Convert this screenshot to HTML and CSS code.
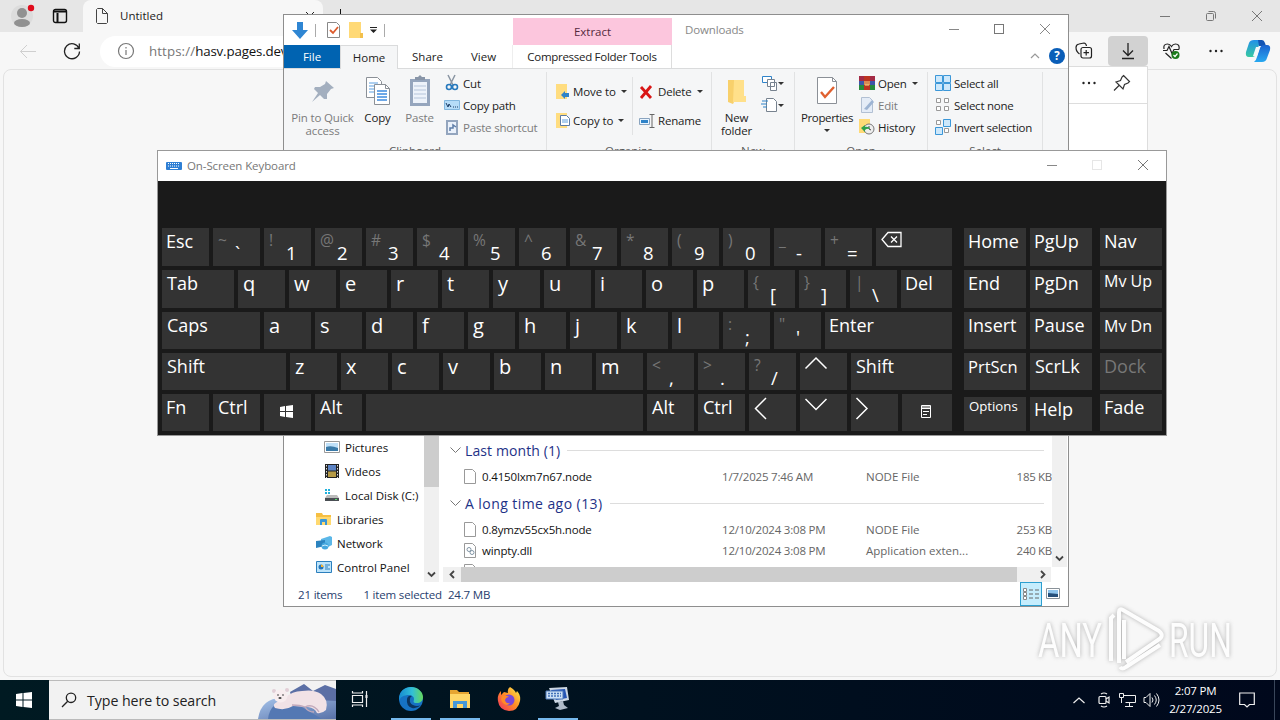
FILE: index.html
```html
<!DOCTYPE html>
<html lang="en">
  <head>
    <meta charset="UTF-8" />
    <title>Desktop</title>
    <link rel="stylesheet" href="styles.css">
  </head>
  <body>
    <!-- browser -->
    <section class="browser">
      <div class="tabstrip">
        <svg class="avatar" width="24" height="26" viewBox="0 0 24 26"><circle cx="11" cy="14" r="11" fill="#dcdcdc"/><circle cx="11" cy="11" r="5" fill="#919191"/><ellipse cx="11" cy="21" rx="8" ry="4" fill="#919191"/><circle cx="20" cy="6" r="3.200" fill="#e00b1c"/></svg>
        <svg class="workspaces" width="16" height="16" viewBox="0 0 16 16" fill="none" stroke="#111" stroke-width="1.4"><rect x="1.5" y="1.5" width="13" height="13" rx="2"/><path d="M2 3.5h12M5.500 5v9" stroke-width="2"/></svg>
        <div class="tab">
          <svg width="12" height="16" viewBox="0 0 12 16" fill="none" stroke="#444"><path d="M1.5.5h5l5 5v9l-1 1h-9l-1-1v-13zM6.500.5v5h5"/></svg>
          <span>Untitled</span>
          <svg class="tab-close" width="10" height="10" viewBox="0 0 10 10" stroke="#222"><path d="M1 1l8 8M9 1l-8 8"/></svg>
        </div>
        <svg class="new-tab" width="12" height="12" viewBox="0 0 12 12" stroke="#111"><path d="M5.500 0v12M0 6h12"/></svg>
        <div class="browser-buttons">
          <svg width="12" height="12" viewBox="0 0 12 12" stroke="#777"><path d="M1 6.500h10"/></svg>
          <svg width="12" height="12" viewBox="0 0 12 12" fill="none" stroke="#777"><rect x="1.500" y="3.500" width="7" height="7" rx="1"/><path d="M3.500 1.500h5q2 0 2 2v5"/></svg>
          <svg width="12" height="12" viewBox="0 0 12 12" stroke="#777"><path d="M1 1l10 10M11 1l-10 10"/></svg>
        </div>
      </div>
      <div class="toolbar">
        <svg class="back" width="18" height="16" viewBox="0 0 18 16" fill="none" stroke="#cfcfcf"><path d="M17 8.500H1.500M8 2l-6.500 6.500L8 15"/></svg>
        <svg class="reload" width="18" height="18" viewBox="0 0 18 18" fill="none" stroke="#222" stroke-width="1.300"><path d="M16 6.500A7.500 7.500 0 1 0 16.500 9.500M16.300 1.500v5h-5"/></svg>
        <div class="address">
          <svg width="18" height="18" viewBox="0 0 18 18" fill="none" stroke="#777" stroke-width="1.200"><circle cx="9" cy="9" r="7.500"/><path d="M9 8v5M9 5v1.500"/></svg>
          <p><span>https://</span>hasv.pages.dev</p>
        </div>
        <div class="tools">
          <svg class="collections" width="18" height="18" viewBox="0 0 18 18" fill="none" stroke="#222" stroke-width="1.200"><path d="M4.500 12Q1 9.500 1 5.500q0-3 3-3.500l5-1q2 0 2.500 3"/><rect x="6" y="5.500" width="10.500" height="10.500" rx="2"/><path d="M11.200 8v5.500M8.500 10.700H14"/></svg>
          <div class="download-button"><svg width="14" height="18" viewBox="0 0 14 18" fill="none" stroke="#222" stroke-width="1.300"><path d="M7 1v12M2 8.500l5 5 5-5M1 16.500h12"/></svg></div>
          <svg class="health" width="20" height="18" viewBox="0 0 20 18" fill="none" stroke="#222" stroke-width="1.200"><path d="M2 7Q1 2 5.500 2q2.500 0 4 2.500 1.500-2.500 4-2.500 4.500 0 3.500 5.500M1 8.500h4l2-4 3 7 2-4h5M3.500 11l6 5.500"/><circle cx="13.500" cy="13" r="4" fill="#1b7a1b" stroke="none"/><path d="M11.500 13l1.500 1.500 2.500-3" stroke="#fff"/></svg>
          <svg class="dots" width="14" height="4" viewBox="0 0 14 4" fill="#222"><circle cx="1.500" cy="2" r="1.200"/><circle cx="7" cy="2" r="1.200"/><circle cx="12.500" cy="2" r="1.200"/></svg>
          <svg class="copilot" width="26" height="24" viewBox="0 0 26 24">
            <defs>
              <linearGradient id="cp1" x1="0" y1="0" x2="0" y2="1"><stop offset="0" stop-color="#2390e8"/><stop offset="1" stop-color="#38c9a2"/></linearGradient>
              <linearGradient id="cp2" x1="0" y1="0" x2="0" y2="1"><stop offset="0" stop-color="#1b62cf"/><stop offset="1" stop-color="#28a9f0"/></linearGradient>
            </defs>
            <path d="M9 1h8q-2 1-3 5l-3 9q-1 3-4 3H4q-4 0-3-5l3-9q1-3 5-3z" fill="url(#cp1)"/>
            <path d="M13 1h4q2 0 3 3l1 3h-7z" fill="#1354b4"/>
            <path d="M17 23H9q2-1 3-5l3-9q1-3 4-3h3q4 0 3 5l-3 8q-1 4-5 4z" fill="url(#cp2)"/>
            <path d="M11 8h4l-3 9H8z" fill="#f5f8fa"/>
          </svg>
        </div>
      </div>
      <div class="page"></div>
      <div class="downloads">
        <div class="downloads-head">
          <svg width="14" height="4" viewBox="0 0 14 4" fill="#222"><circle cx="1.500" cy="2" r="1.200"/><circle cx="7" cy="2" r="1.200"/><circle cx="12.500" cy="2" r="1.200"/></svg>
          <svg width="18" height="18" viewBox="0 0 18 18" fill="none" stroke="#333" stroke-width="1.200"><path d="M10.500 1.500l6 6-1.500 1.500-3.500 1.500-1.500 4.500-7-7 4.500-1.500L9 3zM6 11.500L1 16.500"/></svg>
        </div>
      </div>
    </section>

    <!-- file explorer -->
    <section class="explorer">
      <header class="explorer-title">
        <div class="quick">
          <svg width="16" height="17" viewBox="0 0 16 17"><path d="M5 0h6v8h5l-8 9-8-9h5z" fill="#2f86d3"/></svg>
          <i></i>
          <svg class="q-check" width="13" height="16" viewBox="0 0 13 16"><path d="M.5.5h9l3 3v12H.5z" fill="#fff" stroke="#888"/><path d="M3 8l3 3 5-6" fill="none" stroke="#dd5a2b" stroke-width="1.800"/></svg>
          <svg class="q-folder" width="14" height="16" viewBox="0 0 14 16"><path d="M0 0h12v11h2v5H0z" fill="#ffd976"/><path d="M11 11h3v5h-3z" fill="#f3c04c"/></svg>
          <svg width="7" height="6" viewBox="0 0 7 6"><path d="M0 0h7v1H0zM0 2.500h7L3.500 6z" fill="#222"/></svg>
          <i></i>
        </div>
        <div class="context-tab">Extract</div>
        <span class="window-name">Downloads</span>
        <div class="window-buttons">
          <svg width="12" height="12" viewBox="0 0 12 12" stroke="#888"><path d="M0 5.500h10"/></svg>
          <svg width="12" height="12" viewBox="0 0 12 12" fill="none" stroke="#777"><rect x=".5" y=".5" width="9" height="9"/></svg>
          <svg width="12" height="12" viewBox="0 0 12 12" stroke="#888"><path d="M1 0l10 10M11 0L1 10"/></svg>
        </div>
      </header>
      <nav class="ribbon-tabs">
        <span class="file">File</span>
        <span class="home">Home</span>
        <span class="share">Share</span>
        <span class="view">View</span>
        <span class="tools-tab">Compressed Folder Tools</span>
        <svg class="collapse" width="10" height="6" viewBox="0 0 10 6" fill="none" stroke="#999" stroke-width="1.200"><path d="M1 5l4-4 4 4"/></svg>
        <b class="help">?</b>
      </nav>
      <div class="ribbon">
        <div class="group clipboard">
          <div class="group-body">
            <div class="big pin off">
              <svg width="32" height="34" viewBox="0 0 32 34" fill="#a3afbf"><path d="M19 7l8 7-3 1-4 5 0 5-3 0-4-4-8 7 6-9-4-4 1-2 5 0 5-3z"/></svg>
              <p>Pin to Quick<br>access</p>
            </div>
            <div class="big copy">
              <svg width="26" height="34" viewBox="0 0 26 34" fill="#fff" stroke="#8b9097"><path d="M1.500 3.500h11l4 4v16h-15z"/><path d="M4 9h9M4 12h9M4 15h9M4 18h9" stroke="#5d9fe0"/><path d="M9.500 10.500h11l4 4v16h-15z"/><path d="M20.500 10.500v4h4" fill="none"/><path d="M12 17h10M12 20h10M12 23h10M12 26h10" stroke="#3f8ce0" stroke-width="1.400"/></svg>
              <p>Copy</p>
            </div>
            <div class="big paste off">
              <svg width="22" height="34" viewBox="0 0 22 34"><path d="M1 5h20v27H1z" fill="#95a5bd"/><path d="M4 8h14v21H4z" fill="#edf2fa"/><path d="M6 6V3h3l2-2 2 2h3v3z" fill="#8895a8"/><path d="M5 12h12M5 16h12M5 20h12M5 24h12" stroke="#b5c4da"/></svg>
              <p>Paste</p>
            </div>
            <div class="small-list">
              <div><svg width="16" height="18" viewBox="0 0 16 18" fill="none"><path d="M4 1l5 10M11 1L6 11" stroke="#8a95a3" stroke-width="1.500"/><circle cx="5" cy="13" r="2.500" stroke="#2779bd" stroke-width="1.600"/><circle cx="11" cy="13" r="2.500" stroke="#2779bd" stroke-width="1.600"/></svg><span>Cut</span></div>
              <div><svg width="16" height="16" viewBox="0 0 16 16"><path d="M.5 3.500h15v9H.5z" fill="#b6dcf8" stroke="#82b6de"/><path d="M2 6l2 4 1-3 2 3M9 10h1M11 10h1M13 10h1" stroke="#1b3c66" fill="none"/></svg><span>Copy path</span></div>
              <div class="off"><svg width="16" height="16" viewBox="0 0 16 16"><path d="M2 1h12v15H2z" fill="#93a5be"/><path d="M4 3h8v11H4z" fill="#eaf1fb"/><path d="M6 12V9h3V6l3 2" fill="none" stroke="#5e7da8" stroke-width="1.500"/></svg><span>Paste shortcut</span></div>
            </div>
          </div>
          <h4>Clipboard</h4>
        </div>
        <div class="group organize">
          <div class="group-body">
            <div class="medium-list">
              <div><svg width="14" height="16" viewBox="0 0 14 16"><path d="M0 0h11v15H0z" fill="#ffdd80"/><path d="M5 11l4-4v2h4v4H9v2z" fill="#2f83c9"/></svg><span>Move to</span><em></em></div>
              <div><svg width="14" height="16" viewBox="0 0 14 16"><path d="M0 0h11v15H0z" fill="#ffdd80"/><path d="M4.500 2.500h6l3 3v7h-9z" fill="#fff" stroke="#5c7ba5"/><path d="M6 7h6M6 9h6" stroke="#5d9fe0"/></svg><span>Copy to</span><em></em></div>
            </div>
            <div class="medium-list second">
              <div><svg width="16" height="16" viewBox="0 0 16 16"><path d="M2 3l10 11M12 2L2 14" stroke="#d91616" stroke-width="2.800"/></svg><span>Delete</span><em></em></div>
              <div><svg width="16" height="16" viewBox="0 0 16 16" fill="none"><path d="M.5 5.500h10v6H.5z" fill="#eaf5ff" stroke="#8aa4bf"/><path d="M2 7h7v3H2z" fill="#2f83c9"/><path d="M13 1.500v13M10.500 1.500h5M10.500 14.500h5" stroke="#666"/></svg><span>Rename</span></div>
            </div>
          </div>
          <h4>Organize</h4>
        </div>
        <div class="group new">
          <div class="group-body">
            <div class="big new-folder">
              <svg width="20" height="34" viewBox="0 0 20 34"><path d="M1 6h8v18l-3 6-5-2z" fill="#f8d06b"/><path d="M7 6h10v16h2v6H6z" fill="#ffe08a"/></svg>
              <p>New<br>folder</p>
            </div>
            <div class="new-items">
              <div><svg width="17" height="16" viewBox="0 0 17 16" fill="#fff" stroke="#77828f"><path d="M1.500 1.500h9v6h-9z" stroke="#2f83c9"/><path d="M6.500 4.500h7v7h-7zM9.500 7.500h6v8h-6z"/></svg><em></em></div>
              <div><svg width="17" height="16" viewBox="0 0 17 16" fill="#fff" stroke="#77828f"><path d="M5.500 1.500h7l3 3v10h-10z"/><path d="M1 4h6M0 7h6M2 10h4" stroke="#2f83c9"/></svg><em></em></div>
            </div>
          </div>
          <h4>New</h4>
        </div>
        <div class="group open">
          <div class="group-body">
            <div class="big properties">
              <svg width="22" height="34" viewBox="0 0 22 34"><path d="M1.500 3.500h15l4 4v22h-19z" fill="#fff" stroke="#8b9097"/><path d="M16.500 3.500v4h4" fill="none" stroke="#8b9097"/><path d="M5 18l4 5 9-10" fill="none" stroke="#e0602f" stroke-width="2.400"/></svg>
              <p>Properties</p><em></em>
            </div>
            <div class="small-list">
              <div><svg width="16" height="16" viewBox="0 0 16 16"><path d="M0 1h16v5H0z" fill="#a32a45"/><path d="M0 6h16v4H0z" fill="#3d56a8"/><path d="M0 10h16v5H0z" fill="#278b3c"/><path d="M5 1h6v14H5z" fill="#bb3321"/><path d="M6 6v4h4V6M8 6v4" fill="none" stroke="#f7e083"/></svg><span>Open</span><em></em></div>
              <div class="off"><svg width="16" height="16" viewBox="0 0 16 16"><path d="M2.500.5h8l3 3v12h-11z" fill="#e4ecf7" stroke="#b2c0d3"/><path d="M5 12l8-9 2 2-7 8z" fill="#9db4d3"/></svg><span>Edit</span></div>
              <div><svg width="16" height="16" viewBox="0 0 16 16"><path d="M0 0h11v14H0z" fill="#ffda76"/><circle cx="10" cy="10" r="5" fill="#eee" stroke="#777"/><path d="M10 7v3l2 1" stroke="#444" fill="none"/><path d="M2 9l4-3v2q4-1 5 2-3-1-5 1v2z" fill="#30a04b"/></svg><span>History</span></div>
            </div>
          </div>
          <h4>Open</h4>
        </div>
        <div class="group select">
          <div class="group-body">
            <div class="small-list">
              <div><svg width="16" height="16" viewBox="0 0 16 16" fill="#cde8fb" stroke="#3b97d8"><path d="M.5.5h7v7h-7zM8.500.5h7v7h-7zM.5 8.500h7v7h-7zM8.500 8.500h7v7h-7z"/></svg><span>Select all</span></div>
              <div><svg width="16" height="16" viewBox="0 0 16 16" fill="#fff" stroke="#999"><path d="M1.500 1.500h4v4h-4zM9.500 1.500h4v4h-4zM1.500 9.500h4v4h-4zM9.500 9.500h4v4h-4z"/></svg><span>Select none</span></div>
              <div><svg width="16" height="16" viewBox="0 0 16 16" fill="#cde8fb" stroke="#3b97d8"><path d="M1.500 1.500h4v4h-4zM9.500 9.500h4v4h-4z" fill="#fff" stroke="#999"/><path d="M8.500.5h7v7h-7zM.5 8.500h7v7h-7z"/></svg><span>Invert selection</span></div>
            </div>
          </div>
          <h4>Select</h4>
        </div>
      </div>

      <div class="explorer-body">
        <div class="tree">
          <ul>
            <li class="child"><svg width="16" height="16" viewBox="0 0 16 16"><path d="M.5 2.500h15v11H.5z" fill="#fff" stroke="#999"/><path d="M2 4h12v8H2z" fill="#bfe0f8"/><path d="M2 8q5-2 12 1v3H2z" fill="#3a7aa8"/></svg><span>Pictures</span></li>
            <li class="child"><svg width="16" height="16" viewBox="0 0 16 16"><path d="M1 1h14v14H1z" fill="#222"/><path d="M4 2h8v5.500H4z" fill="#5c83c4"/><path d="M4 8.500h8V14H4z" fill="#b59a45"/><path d="M2.500 2v13M13.500 2v13" stroke="#ddd" stroke-dasharray="1.500 1.500"/></svg><span>Videos</span></li>
            <li class="child"><svg width="16" height="16" viewBox="0 0 16 16"><path d="M1 2h2v2H1zM4 2h2v2H4zM1 5h2v2H1zM4 5h2v2H4z" fill="#1eb0dc"/><path d="M3 8h10l2 3H1z" fill="#bbb"/><path d="M1 11h14v3H1z" fill="#4a4f54"/><path d="M11 12h2v1h-2z" fill="#57e26e"/></svg><span>Local Disk (C:)</span></li>
            <li><svg width="16" height="16" viewBox="0 0 16 16"><path d="M0 2h6l1 2h8v10H0z" fill="#f6bf43"/><path d="M0 6h15v8H0z" fill="#ffd970"/><path d="M4 14V9q0-1 1-1h5q1 0 1 1v5H9v-3H6v3z" fill="#3a97d8"/></svg><span>Libraries</span></li>
            <li><svg width="16" height="16" viewBox="0 0 16 16"><path d="M5 4l9-3 2 1v8l-4 2-7-1z" fill="#5bb7e8"/><path d="M0 6l9-1v6l-9 2z" fill="#2b83bf"/><circle cx="9" cy="11" r="3.500" fill="#45a7de"/><path d="M6 11q3-2 6 0" stroke="#cdeeff" fill="none"/></svg><span>Network</span></li>
            <li><svg width="16" height="16" viewBox="0 0 16 16"><path d="M.5 2.500h15v11H.5z" fill="#bde4fb" stroke="#2c7fbd"/><circle cx="5" cy="8" r="2.500" fill="#2676ba"/><path d="M5 8V5.500A2.500 2.500 0 0 1 7.500 8z" fill="#ffb52e"/><path d="M9 6h5M9 8h3M9 10h5" stroke="#2c7fbd"/></svg><span>Control Panel</span></li>
          </ul>
          <div class="v-scroll">
            <div class="thumb"></div>
            <svg width="15" height="16" viewBox="0 0 15 16" fill="none" stroke="#444" stroke-width="1.800"><path d="M4 6.500L7.500 10 11 6.500"/></svg>
          </div>
        </div>
        <div class="files">
          <div class="list">
            <h3><svg width="11" height="7" viewBox="0 0 11 7" fill="none" stroke="#777"><path d="M.5.500l5 5 5-5"/></svg><span>Last month (1)</span></h3>
            <div class="row">
              <svg width="12" height="15" viewBox="0 0 12 15"><path d="M.5.500h8l3 3v11H.5z" fill="#fff" stroke="#999"/></svg>
              <span class="name">0.4150lxm7n67.node</span><span class="date">1/7/2025 7:46 AM</span><span class="kind">NODE File</span><span class="size">185 KB</span>
            </div>
            <h3 class="older"><svg width="11" height="7" viewBox="0 0 11 7" fill="none" stroke="#777"><path d="M.5.500l5 5 5-5"/></svg><span>A long time ago (13)</span></h3>
            <div class="row">
              <svg width="12" height="15" viewBox="0 0 12 15"><path d="M.5.500h8l3 3v11H.5z" fill="#fff" stroke="#999"/></svg>
              <span class="name">0.8ymzv55cx5h.node</span><span class="date">12/10/2024 3:08 PM</span><span class="kind">NODE File</span><span class="size">253 KB</span>
            </div>
            <div class="row">
              <svg width="12" height="15" viewBox="0 0 12 15"><path d="M.5.500h8l3 3v11H.5z" fill="#fff" stroke="#999"/><circle cx="5" cy="6.500" r="2" fill="none" stroke="#8195a5"/><circle cx="8" cy="9.500" r="2" fill="none" stroke="#8195a5"/></svg>
              <span class="name">winpty.dll</span><span class="date">12/10/2024 3:08 PM</span><span class="kind">Application exten...</span><span class="size">240 KB</span>
            </div>
            <div class="row cut"><svg width="12" height="15" viewBox="0 0 12 15"><path d="M.5.500h8l3 3v11H.5z" fill="#fff" stroke="#999"/></svg></div>
            <div class="list-scroll"><svg width="15" height="16" viewBox="0 0 15 16" fill="none" stroke="#444" stroke-width="1.800"><path d="M4 5.500L7.500 9 11 5.500"/></svg></div>
          </div>
          <div class="h-scroll">
            <svg width="18" height="15" viewBox="0 0 18 15" fill="none" stroke="#444" stroke-width="1.800"><path d="M11 4L7.500 7.500 11 11"/></svg>
            <div class="thumb"></div>
            <svg width="17" height="15" viewBox="0 0 17 15" fill="none" stroke="#444" stroke-width="1.800"><path d="M7 4l3.500 3.500L7 11"/></svg>
          </div>
        </div>
      </div>
      <footer class="status">
        <span>21 items</span><span class="chosen">1 item selected</span><span class="total">24.7 MB</span>
        <div class="details-view"><svg width="18" height="14" viewBox="0 0 18 14" fill="none" stroke="#888"><path d="M1.500 1.500h3v3h-3zM1.500 5.500h3v3h-3zM1.500 9.500h3v3h-3z" fill="#fff"/><path d="M7 3h4M13 3h4M7 7h4M13 7h4M7 11h4M13 11h4" stroke="#666"/></svg></div>
        <svg width="14" height="12" viewBox="0 0 14 12"><path d="M.5.500h13v10H.5z" fill="#fff" stroke="#8a9299"/><path d="M2 2h10v7H2z" fill="#8fc4ec"/><path d="M2 5l10 1v3H2z" fill="#27507a"/></svg>
      </footer>
    </section>

    <!-- on-screen keyboard -->
    <section class="keyboard">
      <header>
        <svg width="16" height="10" viewBox="0 0 16 10"><rect y="1" width="16" height="8" rx="1" fill="#2f7fd4"/><path d="M2 2.500h12M2 5h12" stroke="#fff" stroke-dasharray="1 1"/><path d="M4 7.500h8" stroke="#fff"/></svg>
        <span>On-Screen Keyboard</span>
        <div class="window-buttons">
          <svg width="12" height="12" viewBox="0 0 12 12" stroke="#888"><path d="M0 5.500h10"/></svg>
          <svg width="12" height="12" viewBox="0 0 12 12" fill="none" stroke="#e6e6e6"><rect x=".5" y=".5" width="9" height="9"/></svg>
          <svg width="12" height="12" viewBox="0 0 12 12" stroke="#777"><path d="M1 0l10 10M11 0L1 10"/></svg>
        </div>
      </header>
      <div class="keys" id="keys"></div>
    </section>

    <!-- watermark -->
    <svg class="watermark" width="230" height="74" viewBox="0 0 230 74">
      <text x="6" y="53" textLength="64" lengthAdjust="spacingAndGlyphs">ANY</text>
      <text x="137" y="53" textLength="63" lengthAdjust="spacingAndGlyphs">RUN</text>
      <path d="M79 57V14l3-3M87 59V8q0-4 4-2l36 21q6 5-1 9L94 58M92 16v39M88 63q2 3 6 0l34-22" fill="none" stroke="#fff" stroke-width="4"/>
    </svg>

    <!-- taskbar -->
    <section class="taskbar">
      <div class="start"><svg width="16" height="16" viewBox="0 0 16 16" fill="#fff"><path d="M0 2l6.500-1v6.500H0zM7.500 1L16 0v7.500H7.500zM0 8.500h6.500V15L0 14zM7.500 8.500H16V16l-8.500-1z"/></svg></div>
      <div class="search">
        <svg width="16" height="16" viewBox="0 0 16 16" fill="none" stroke="#222" stroke-width="1.300"><circle cx="10" cy="5.800" r="4.700"/><path d="M6.700 9.300L1 15"/></svg>
        <span>Type here to search</span>
        <svg class="bear" width="78" height="38" viewBox="0 0 78 38">
          <defs><linearGradient id="ice" x1="0" y1="0" x2="1" y2="1"><stop offset="0" stop-color="#a5c3ea"/><stop offset="1" stop-color="#5871a8"/></linearGradient></defs>
          <path d="M32 11l14-8 9 7 12-6 11 4v16H36z" fill="#5b6fa5"/>
          <path d="M0 38Q3 17 24 17l54 3v18z" fill="url(#ice)"/>
          <path d="M10 38q2-18 22-19l32 19z" fill="#5478b3"/>
          <path d="M27 17q7-7 17-7 12-2 19 3 8 6 5 16-4 4-9 3-2-5-9-6l-15-1q-8 5-18 2-3-4 2-6 5-1 8-4z" fill="#f1e2e6"/>
          <path d="M34 24q8 0 13 2 8-4 14 5M47 26q3 5 9 5" stroke="#c2a9bb" fill="none" stroke-width="1.300"/>
          <circle cx="16" cy="10" r="2" fill="#e2ced6"/><circle cx="29" cy="9" r="2" fill="#e2ced6"/>
          <ellipse cx="22.500" cy="15" rx="7" ry="6.500" fill="#f8edef"/><circle cx="20" cy="14" r=".8" fill="#333"/><circle cx="25" cy="14" r=".8" fill="#333"/><ellipse cx="22" cy="17" rx="1.600" ry="1" fill="#444"/>
        </svg>
      </div>
      <div class="app task-view"><svg width="18" height="18" viewBox="0 0 18 18" fill="none" stroke="#eee" stroke-width="1.200"><path d="M1.500 5.500h10v7h-10zM1.500 1v2h10V1M1.500 17v-2h10v2M15.500 1v16"/><path d="M14.500 5h2v3h-2z" fill="#eee" stroke="none"/></svg></div>
      <div class="app edge active">
        <svg width="24" height="24" viewBox="0 0 24 24">
          <defs><linearGradient id="e1"><stop offset="0" stop-color="#168bd2"/><stop offset=".55" stop-color="#32bfd7"/><stop offset="1" stop-color="#66d85b"/></linearGradient></defs>
          <circle cx="12" cy="12" r="12" fill="#1672c4"/>
          <path d="M0 12C0 4 6 0 12 0c7 0 12 5 12 10 0 4-3 6-6 6-5 0-3-2-3-4 0-3-3-4-5-4-5 0-9 2-10 6z" fill="url(#e1)"/>
          <path d="M8 12q-1 7 5 9 5 1 9-3-4 2-8 0-4-2-3-6 0-2 2-3-4-1-5 3z" fill="#0b345f"/>
        </svg>
      </div>
      <div class="app active"><svg width="22" height="20" viewBox="0 0 22 20"><path d="M1 1h7l2 2h10v3H1z" fill="#e6a532"/><path d="M1 5h20v14H1z" fill="#ffd667"/><path d="M4 19v-7h14v7h-4v-4H8v4z" fill="#4598d8"/></svg></div>
      <div class="app firefox">
        <svg width="24" height="24" viewBox="0 0 24 24">
          <defs><linearGradient id="fx" x1="1" y1="0" x2="0" y2="1"><stop offset="0" stop-color="#fff04f"/><stop offset=".5" stop-color="#ff8b25"/><stop offset="1" stop-color="#f02b65"/></linearGradient></defs>
          <path d="M13 0q5 3 6 6l1-2q4 4 3 10-2 10-11 10Q2 23 1 14 0 8 4 4v4l3-3 4 1q-1-4 2-6z" fill="url(#fx)"/>
          <circle cx="12" cy="13" r="5.500" fill="#7a48d8"/><path d="M5 9q5-1 7 1-3 0-4 3 1 4 5 3-3 4-7 0-3-3-1-7z" fill="#ff8a28"/>
        </svg>
      </div>
      <div class="app osk active">
        <svg width="26" height="24" viewBox="0 0 26 24"><path d="M4 1l18-1 2 13-14 3z" fill="#cdd8e4"/><path d="M6 3l14-1 2 9-11 2z" fill="#2555b5"/><path d="M1 4h17v8H1z" fill="#cce0f5" stroke="#4c78ba"/><path d="M3 6.500h13M3 9h13" stroke="#4271b9" stroke-dasharray="2 1" stroke-width="1.300"/><path d="M13 15l5-1 1 4 4 3-8 2-5-2 4-2z" fill="#aebac8"/></svg>
      </div>
      <div class="tray">
        <svg class="t-up" width="12" height="7" viewBox="0 0 12 7" fill="none" stroke="#eee" stroke-width="1.200"><path d="M.5 6L6 1l5.500 5"/></svg>
        <svg class="t-cam" width="12" height="16" viewBox="0 0 12 16" fill="none" stroke="#eee" stroke-width="1.200"><path d="M3 2q3-2 6 0M3 14q3 2 6 0"/><rect x="1" y="4.500" width="7" height="7" rx="1"/><path d="M8 7l3-2v6l-3-2"/></svg>
        <svg class="t-net" width="17" height="14" viewBox="0 0 17 14" fill="none" stroke="#eee"><path d="M4.500 2.500h12v7H6.500M10.500 10v3M6 13.500h8M.5.500h4v4h-4zM2.500 5v5"/></svg>
        <svg class="t-vol" width="17" height="14" viewBox="0 0 17 14" fill="none" stroke="#eee"><path d="M1 4.500h2l4-4v13l-4-4H1zM9 4.500q2 2.500 0 5M11.500 2.500q3.500 4.500 0 9M13.500.5q5 6.500 0 13"/></svg>
        <div class="clock"><span>2:07 PM</span><span>2/27/2025</span></div>
        <svg class="t-note" width="16" height="16" viewBox="0 0 16 16" fill="none" stroke="#eee" stroke-width="1.200"><path d="M.7 1h14.600v11.500H10.500L8 15l-2.500-2.500H.7z"/></svg>
        <i></i>
      </div>
    </section>
    <script src="keyboard.js"></script>
  </body>
</html>
```
FILE: styles.css
```css
* {
  margin: 0;
  padding: 0;
  box-sizing: border-box;
}

body {
  position: relative;
  width: 1280px;
  height: 720px;
  overflow: hidden;
  font-family: "Open Sans", "Noto Sans", sans-serif;
  font-size: 11.5px;
  color: #222;
}

svg {
  display: block;
  flex: none;
}

span,
p {
  white-space: nowrap;
}

/* browser */
.browser {
  position: absolute;
  inset: 0 0 40px 0;
  background: #f7f7f7;
}

.tabstrip {
  display: flex;
  height: 32px;
  background: #e6e6e6;
}

.avatar {
  margin: 2px 0 0 11px;
}

.workspaces {
  margin: 8px 0 0 17px;
}

.tab {
  display: flex;
  align-items: center;
  width: 240px;
  margin-left: 15px;
  padding-left: 13px;
  background: #f7f7f7;
  border-radius: 8px 8px 0 0;
}

.tab span {
  margin-left: 12px;
  padding-bottom: 2px;
  width: 42px;
}

.tab-close {
  margin-left: 143px;
}

.new-tab {
  margin: 9px 0 0 12px;
}

.browser-buttons {
  display: flex;
  gap: 34px;
  margin: 10px 17px 0 auto;
}

.toolbar {
  display: flex;
  align-items: center;
  height: 38px;
}

.back {
  margin-left: 19px;
}

.reload {
  margin-left: 26px;
}

.address {
  display: flex;
  align-items: center;
  width: 900px;
  height: 31px;
  margin-left: 19px;
  padding-left: 17px;
  border-radius: 16px;
  background: #fff;
}

.address p {
  margin-left: 14px;
  font-size: 13.3px;
  letter-spacing: -0.15px;
  color: #111;
}

.address p span {
  letter-spacing: 0.1px;
  color: #777;
}

.tools {
  display: flex;
  align-items: center;
  margin-left: auto;
  padding-right: 9px;
}

.download-button {
  display: flex;
  justify-content: center;
  align-items: center;
  width: 40px;
  height: 30px;
  margin: 0 14px 0 15px;
  border-radius: 4px;
  background: #d2d2d2;
}

.dots {
  margin: 0 22px 0 27px;
}

.page {
  height: 608px;
  margin: -1px 3px 0;
  border: 1px solid #e2e2e2;
  border-radius: 8px;
  background: #f7f7f7;
}

.downloads {
  position: absolute;
  top: 66px;
  left: 780px;
  width: 368px;
  height: 330px;
  border: 1px solid #ddd;
  background: #fff;
}

.downloads-head {
  display: flex;
  justify-content: flex-end;
  align-items: center;
  gap: 17px;
  height: 37px;
  padding: 0 16px 5px 0;
  border-bottom: 1px solid #ddd;
}

/* explorer */
.explorer {
  position: absolute;
  left: 283px;
  top: 14px;
  width: 786px;
  height: 593px;
  display: flex;
  flex-direction: column;
  border: 1px solid #8e8e8e;
  background: #fff;
}

.explorer-title {
  display: flex;
  height: 30px;
  flex: none;
}

.quick {
  display: flex;
  align-items: center;
  width: 229px;
  padding-left: 8px;
}

.quick i {
  width: 1px;
  height: 13px;
  margin-left: 7px;
  background: #aaa;
}

.q-check {
  margin-left: 11px;
}

.q-folder {
  margin: 0 7px 0 9px;
}

.context-tab {
  width: 159px;
  height: 27px;
  margin-top: 3px;
  text-align: center;
  line-height: 27px;
  background: #fcc6dd;
  color: #542a3d;
}

.window-name {
  margin-left: 13px;
  line-height: 29px;
  color: #888;
  letter-spacing: -0.15px;
}

.window-buttons {
  display: flex;
  align-items: center;
  gap: 33px;
  margin-left: auto;
  padding-right: 17px;
}

.ribbon-tabs {
  display: flex;
  height: 24px;
  flex: none;
  line-height: 24px;
  text-align: center;
  border-bottom: 1px solid #dadbdc;
}

.file {
  width: 56px;
  background: #0063b1;
  color: #fff;
}

.home {
  width: 58px;
  height: 24px;
  line-height: 23px;
  border: 1px solid #dadbdc;
  border-bottom: 0;
  background: #f5f6f7;
}

.share {
  width: 59px;
}

.view {
  width: 53px;
}

.tools-tab {
  width: 160px;
  margin-left: 2px;
  border-left: 1px solid #eee;
  border-right: 1px solid #ddd;
  letter-spacing: -0.29px;
}

.collapse {
  margin: 8px 9px 0 auto;
}

.help {
  width: 16px;
  height: 16px;
  margin: 3px 3px 0 0;
  border-radius: 50%;
  background: #0a5eb8;
  color: #fff;
  line-height: 16px;
}

.ribbon {
  display: flex;
  height: 92px;
  flex: none;
  background: #f5f6f7;
}

.group {
  margin: 3px 0;
  border-right: 1px solid #e1e2e3;
}

.group-body {
  display: flex;
  height: 72px;
}

.group h4 {
  font-weight: normal;
  text-align: center;
  line-height: 14px;
  color: #5a5a5a;
}

.clipboard {
  width: 263px;
}

.organize {
  width: 165px;
}

.new {
  width: 83px;
}

.open {
  width: 133px;
}

.select {
  width: 115px;
}

.big {
  display: flex;
  flex-direction: column;
  align-items: center;
  padding-top: 2px;
  text-align: center;
  line-height: 13px;
}

.big p {
  padding-top: 3px;
  letter-spacing: -0.15px;
}

.pin {
  width: 77px;
}

.copy {
  width: 33px;
}

.paste {
  width: 51px;
}

.off {
  color: #7c7c7c;
}

.small-list {
  letter-spacing: -0.2px;
}

.small-list div {
  display: flex;
  align-items: center;
  height: 22px;
}

.small-list span {
  margin-left: 3px;
}

.clipboard .small-list {
  margin-left: -1px;
}

em {
  width: 0;
  border: 3px solid transparent;
  border-top-color: #333;
  border-bottom-width: 0;
}

.small-list em,
.medium-list em {
  margin-left: 5px;
}

.medium-list {
  width: 85px;
  height: 58px;
  margin-top: 5px;
  padding-left: 9px;
  letter-spacing: -0.1px;
}

.medium-list div {
  display: flex;
  align-items: center;
  height: 29px;
}

.medium-list span {
  margin-left: 3px;
}

.medium-list.second {
  width: auto;
  padding-left: 6px;
  border-left: 1px solid #e1e2e3;
  letter-spacing: -0.2px;
}

.new-folder {
  width: 49px;
}

.new-items div {
  display: flex;
  align-items: center;
  height: 22px;
}

.new-items em {
  margin-left: 0;
}

.properties {
  width: 64px;
}

.properties p {
  letter-spacing: -0.35px;
}

.properties em {
  margin-top: 5px;
}

.select .small-list {
  padding-left: 7px;
  letter-spacing: -0.25px;
}

.explorer-body {
  flex: 1;
  display: flex;
  min-height: 0;
}

.tree {
  display: flex;
  width: 156px;
}

.tree ul {
  display: flex;
  flex-direction: column;
  justify-content: flex-end;
  width: 140px;
  padding-bottom: 3px;
  list-style: none;
  color: #111;
}

.tree li {
  display: flex;
  align-items: center;
  height: 24px;
  padding-left: 32px;
}

.tree .child {
  padding-left: 40px;
}

.tree li span {
  margin-left: 5px;
}

.v-scroll {
  display: flex;
  flex-direction: column;
  justify-content: space-between;
  width: 15px;
  background: #f0f0f0;
}

.v-scroll .thumb {
  height: 326px;
  background: #cdcdcd;
}

.files {
  display: flex;
  flex-direction: column;
  width: 628px;
  padding-left: 3px;
}

.list {
  position: relative;
  flex: 1;
  display: flex;
  flex-direction: column;
  justify-content: flex-end;
  min-height: 0;
}

.list h3 {
  display: flex;
  align-items: center;
  height: 20px;
  margin: 0 24px 6px 7px;
  font-size: 14px;
  font-weight: normal;
  letter-spacing: 0.1px;
  color: #1e3287;
}

.list h3 span {
  margin: 0 7px 0 4px;
}

.list h3::after {
  content: "";
  flex: 1;
  height: 1px;
  background: #ddd;
}

.list .older {
  margin-top: 6px;
  letter-spacing: 0.43px;
}

.row {
  display: flex;
  align-items: center;
  height: 21px;
  padding-left: 21px;
  color: #666;
}

.name {
  width: 240px;
  margin-left: 6px;
  letter-spacing: -0.16px;
  color: #111;
}

.date {
  width: 144px;
  letter-spacing: -0.2px;
}

.kind {
  width: 135px;
}

.size {
  flex: 1;
  padding-right: 16px;
  text-align: right;
  letter-spacing: -0.3px;
}

.cut {
  height: 6px;
  align-items: flex-start;
  overflow: hidden;
  padding-top: 3px;
}

.list-scroll {
  position: absolute;
  top: 0;
  right: 1px;
  bottom: 0;
  display: flex;
  align-items: flex-end;
  width: 15px;
  background: #f0f0f0;
}

.h-scroll {
  display: flex;
  width: 608px;
  height: 15px;
  background: #f0f0f0;
}

.h-scroll .thumb {
  width: 556px;
  margin-right: 17px;
  background: #cdcdcd;
}

.status {
  display: flex;
  align-items: center;
  height: 24px;
  flex: none;
  padding: 0 8px 0 14px;
  letter-spacing: -0.17px;
  color: #28406e;
}

.chosen {
  margin-left: 21px;
}

.total {
  margin-left: 6px;
}

.details-view {
  display: flex;
  align-items: center;
  justify-content: center;
  width: 22px;
  height: 24px;
  margin: 0 4px 0 auto;
  border: 1px solid #2c9fd0;
  background: #c5edfd;
}

/* keyboard */
.keyboard {
  position: absolute;
  left: 157px;
  top: 150px;
  width: 1010px;
  height: 286px;
  border: 1px solid #999;
  background: #1a1a1a;
}

.keyboard header {
  display: flex;
  align-items: center;
  height: 30px;
  padding-left: 8px;
  background: #fff;
  color: #777;
}

.keyboard header span {
  margin-left: 5px;
  padding-bottom: 2px;
  letter-spacing: -0.1px;
}

.keys {
  display: grid;
  row-gap: 4px;
  padding: 47px 4px 0;
  grid-template-rows: 38px 38px 37px 37px 37px;
}

.key-row {
  display: flex;
  gap: 4px;
}

.key {
  display: flex;
  height: 100%;
  padding-left: 4px;
  background: #333;
  color: #fff;
  font-size: 18px;
  line-height: 26px;
  white-space: pre;
}

.key.wide {
  padding-left: 5px;
}

.key.letter {
  padding-left: 5px;
  font-size: 20px;
  line-height: 27px;
}

.key.pair {
  font-size: 18.5px;
}

.key.pair b {
  flex: none;
  width: 17px;
  margin-left: 1px;
  font-size: 15.5px;
  font-weight: normal;
  line-height: 24px;
  color: #777;
}

.key.pair span {
  margin-top: 12px;
}

.key-row .nav-start {
  margin-left: 8px;
}

.key-row .side {
  margin-left: 4px;
}

.key.mid {
  font-size: 16.5px;
  line-height: 27px;
}

.key.mv {
  font-size: 16px;
  line-height: 22px;
}

.key.mv2 {
  font-size: 16px;
  line-height: 28px;
}

.key.tiny {
  height: 34px;
  margin-top: 3px;
  padding-left: 5px;
  font-size: 13.2px;
  line-height: 19px;
}

.key.low {
  height: 34px;
  margin-top: 3px;
  line-height: 25px;
}

.key.dim {
  color: #777;
}

.key.icon {
  padding: 0;
}

/* watermark */
.watermark {
  position: absolute;
  left: 1032px;
  top: 604px;
  filter: drop-shadow(0 0 2px #999);
  opacity: 0.75;
}

.watermark text {
  font-family: Roboto, sans-serif;
  font-size: 48px;
  fill: #fff;
}

/* taskbar */
.taskbar {
  position: absolute;
  left: 0;
  bottom: 0;
  width: 1280px;
  height: 40px;
  display: flex;
  background: linear-gradient(90deg, #001a22, #00111f 50%, #00081c);
}

.start {
  width: 49px;
  padding: 12px 0 0 16px;
}

.search {
  display: flex;
  align-items: center;
  width: 287px;
  padding-left: 12px;
  border: 1px solid #bbb;
  border-width: 1px 0;
  background: #f2f2f2;
  font-size: 14.2px;
}

.search span {
  margin-left: 10px;
  letter-spacing: -0.07px;
}

.bear {
  margin-left: auto;
}

.app {
  display: flex;
  justify-content: center;
  align-items: center;
  width: 40px;
  margin-left: 9px;
  border-bottom: 2px solid transparent;
}

.app.task-view {
  width: 48px;
  margin-left: 0;
  margin-right: -2px;
}

.app.active {
  border-color: #76b9ed;
}

.tray {
  display: flex;
  align-items: center;
  margin-left: auto;
  color: #fff;
}

.t-up {
  margin-right: 1px;
}

.t-cam {
  margin-left: 12px;
}

.t-net {
  margin-left: 9px;
}

.t-vol {
  margin-left: 7px;
}

.clock {
  display: flex;
  flex-direction: column;
  align-items: center;
  width: 55px;
  margin: 0 16px 0 8px;
  line-height: 18px;
  letter-spacing: -0.2px;
}

.tray i {
  width: 1px;
  height: 40px;
  margin-left: 19px;
  margin-right: 5px;
  background: #39465a;
}
```
FILE: keyboard.js
```js
const ICONS = {
  back: '<svg width="28" height="22" viewBox="0 0 28 22" fill="none" stroke="#fff" stroke-width="1.300"><path d="M6 11.500L12 4.500h13v14H12zM15 8.500l6 6M21 8.500l-6 6"/></svg>',
  up: '<svg width="32" height="26" viewBox="0 0 32 26" fill="none" stroke="#fff" stroke-width="1.500"><path d="M5.500 15.500L16 5l10.500 10.500"/></svg>',
  down: '<svg width="32" height="26" viewBox="0 0 32 26" fill="none" stroke="#fff" stroke-width="1.500"><path d="M5.500 5L16 15.500 26.500 5"/></svg>',
  left: '<svg width="32" height="30" viewBox="0 0 32 30" fill="none" stroke="#fff" stroke-width="1.500"><path d="M17 4L6.500 14.500 17 25"/></svg>',
  right: '<svg width="32" height="30" viewBox="0 0 32 30" fill="none" stroke="#fff" stroke-width="1.500"><path d="M5.500 4L16 14.500 5.500 25"/></svg>',
  win: '<svg width="32" height="26" viewBox="0 0 32 26" fill="#fff"><path d="M16 13l5-1v5h-5zM22 12l7-1v6h-7zM16 18h5v5l-5-1zM22 18h7v6l-7-1z"/></svg>',
  menu: '<svg width="32" height="26" viewBox="0 0 32 26" fill="none" stroke="#fff"><path d="M19.500 11.500h9v12h-9zM19 13h10M19 14.500h10M21 17.500h6M21 20.500h4"/></svg>',
};

// [label, width, class, shifted label]
const ROWS = [
  [
    ["Esc", 47], ["`", 47, "pair", "~"], ["1", 47, "pair", "!"], ["2", 47, "pair", "@"],
    ["3", 47, "pair", "#"], ["4", 47, "pair", "$"], ["5", 47, "pair", "%"], ["6", 47, "pair", "^"],
    ["7", 47, "pair", "&"], ["8", 47, "pair", "*"], ["9", 47, "pair", "("], ["0", 47, "pair", ")"],
    ["-", 47, "pair", "_"], ["=", 47, "pair", "+"], ["back", 76, "icon"],
    ["Home", 62, "nav-start"], ["PgUp", 62], ["Nav", 62, "side"],
  ],
  [
    ["Tab", 72, "wide"], ..."qwertyuiop", ["[", 47, "pair", "{"], ["]", 47, "pair", "}"],
    ["\\", 47, "pair", "|"], ["Del", 51],
    ["End", 62, "nav-start"], ["PgDn", 62], ["Mv Up", 62, "side mv"],
  ],
  [
    ["Caps", 98, "wide"], ..."asdfghjkl", [";", 47, "pair", ":"], ["'", 47, "pair", '"'], ["Enter", 127],
    ["Insert", 62, "nav-start"], ["Pause", 62], ["Mv Dn", 62, "side mv2"],
  ],
  [
    ["Shift", 124, "wide"], ..."zxcvbnm", [",", 47, "pair", "<"], [".", 47, "pair", ">"],
    ["/", 47, "pair", "?"], ["up", 47, "icon"], ["Shift", 101, "wide"],
    ["PrtScn", 62, "nav-start mid"], ["ScrLk", 62, "wide"], ["Dock", 62, "side dim"],
  ],
  [
    ["Fn", 47], ["Ctrl", 47, "wide"], ["win", 47, "icon"], ["Alt", 47, "wide"], ["", 277],
    ["Alt", 47, "wide"], ["Ctrl", 47, "wide"], ["left", 47, "icon"], ["down", 47, "icon"], ["right", 47, "icon"],
    ["menu", 50, "icon"],
    ["Options", 62, "nav-start tiny"], ["Help", 62, "low"], ["Fade", 62, "side"],
  ],
];

const keys = document.getElementById("keys");

ROWS.forEach(function (row) {
  const line = document.createElement("div");
  line.className = "key-row";
  row.forEach(function (item) {
    const [label, width, cls = "", shifted] = item.length === 1 ? [item, 47, "letter"] : item;
    const key = document.createElement("div");
    key.className = "key " + cls;
    key.style.width = width + "px";
    if (cls === "icon") {
      key.innerHTML = ICONS[label];
    } else {
      if (shifted) {
        const top = document.createElement("b");
        top.textContent = shifted;
        key.append(top);
      }
      const main = document.createElement("span");
      main.textContent = label;
      key.append(main);
    }
    line.append(key);
  });
  keys.append(line);
});
```
